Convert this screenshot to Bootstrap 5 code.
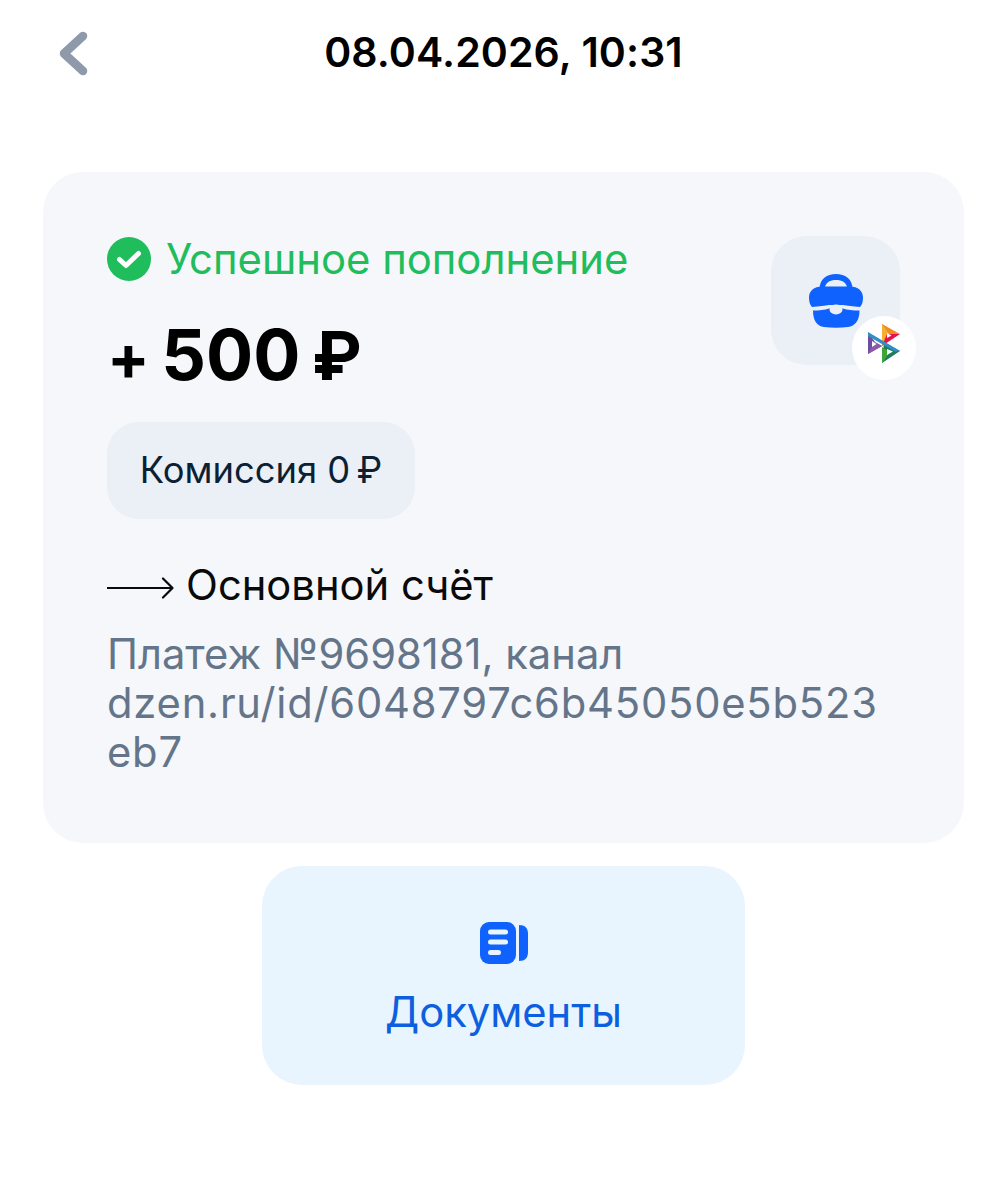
<!DOCTYPE html>
<html lang="ru">
<head>
<meta charset="utf-8">
<title>Операция</title>
<link href="https://cdn.jsdelivr.net/npm/bootstrap@5.3.0/dist/css/bootstrap.min.css" rel="stylesheet">
<style>
body { font-family: Inter, "Noto Sans", "Liberation Sans", sans-serif; background: #fff; color: #000; }
.scr { height: 1200px; padding: 0 43px; }
.topbar { height: 172px; padding-bottom: 68px; position: relative; }
.back-ic { position: absolute; left: 13px; top: 30px; width: 32px; height: 46px; }
.top-t { font-size: 41px; font-weight: 600; line-height: 105px; letter-spacing: .1px; }
.opcard { background: #f5f7fb; border-radius: 40px; height: 671px; padding: 64px; }
.stat { color: #1fbd5c; font-size: 41.800px; line-height: 46px; gap: 15px; }
.amt { font-size: 70px; font-weight: 700; line-height: 84px; margin-top: 31px; word-spacing: -5px; }
.amt-plus { font-size: 63px; line-height: 1; }
.amt-rub { font-size: 67px; line-height: 1; }
.fee { background: #ebeff6; color: #0b1f35; border-radius: 32px; height: 97px; width: 308px; font-size: 36.300px; margin-top: 25px; }
.dest { font-size: 41.700px; line-height: 46px; margin-top: 43px; gap: 12px; color: #0a0a0a; }
.dest svg { margin-top: 6px; }
.note { color: #64758a; font-size: 41.700px; line-height: 49px; margin-top: 22px; width: 775px; overflow-wrap: anywhere; }
.note-id { letter-spacing: .8px; }
.iconbox { background: #ebeff6; border-radius: 36px; width: 129px; height: 129px; position: absolute; right: 64px; top: 64px; }
.logo-b { background: #fff; border-radius: 50%; width: 64px; height: 64px; position: absolute; left: 81px; top: 80px; }
.docs { background: #e8f5fe; color: #0e5fe0; border-radius: 40px; width: 483px; height: 219px; margin: 23px auto 0; padding-top: 13px; font-size: 41.700px; gap: 16px; }
</style>
</head>
<body>
<div class="scr">
  <div class="topbar d-flex justify-content-center">
    <svg class="back-ic" viewBox="0 0 32 46" fill="none"><path d="M27 6 L8 23.500 L27 41" stroke="#8e9aaa" stroke-width="8.500" stroke-linecap="round" stroke-linejoin="round"/></svg>
    <div class="top-t">08.04.2026, 10:31</div>
  </div>
  <div class="opcard position-relative">
    <div class="stat d-flex align-items-center">
      <svg width="44" height="44" viewBox="0 0 44 44"><circle cx="22" cy="22" r="22" fill="#1fbd5c"/><path d="M12.500 22.500 L19 28.500 L31.500 16.500" fill="none" stroke="#fff" stroke-width="5" stroke-linecap="round" stroke-linejoin="round"/></svg>
      <span>Успешное пополнение</span>
    </div>
    <div class="amt"><span class="amt-plus">+</span> 500 <span class="amt-rub">₽</span></div>
    <div class="fee d-flex align-items-center justify-content-center">Комиссия 0&#8201;₽</div>
    <div class="dest d-flex align-items-center">
      <svg width="67" height="22" viewBox="0 0 67 22" fill="none"><path d="M0 11 H65 M56 1.500 L65.500 11 L56 20.500" stroke="#0a0a0a" stroke-width="2.200" stroke-linecap="round" stroke-linejoin="round"/></svg>
      <span>Основной счёт</span>
    </div>
    <div class="note">Платеж №9698181, канал <span class="note-id">dzen.ru/id/6048797c6b45050e5b523eb7</span></div>
    <div class="iconbox d-flex align-items-center justify-content-center">
      <svg width="66" height="64" viewBox="0 0 66 64">
        <path d="M16.500 20 C16.500 10 24 5 33 5 C42 5 49.500 10 49.500 20 Z" fill="#0f62fe"/>
        <path d="M22 18 C23 13.500 27 11 33 11 C39 11 43 13.500 44 18 Z" fill="#ebeff6"/>
        <path d="M19 17.500 H47 C55 17.500 60 22 60 28.500 C60 33 59 36 57 38 C50 37.500 44 36.500 40 36 H26 C22 36.500 16 37.500 9 38 C7 36 6 33 6 28.500 C6 22 11 17.500 19 17.500 Z" fill="#0f62fe"/>
        <path d="M10 41.500 C16 41.500 22 41 26 39.500 H40 C44 41 50 41.500 56.500 41.500 C56.500 52 52 57 45 58 C37 59 29 59 21 58 C14 57 10 52 10 41.500 Z" fill="#0f62fe"/>
        <ellipse cx="33" cy="40.500" rx="6.500" ry="5" fill="#ebeff6"/>
      </svg>
      <div class="logo-b d-flex align-items-center justify-content-center">
        <svg width="44" height="52" viewBox="0 0 44 52">
          <polygon points="20,2 38,12 20,12" fill="#f08a24"/>
          <polygon points="20,2 27,12 20,24" fill="#f4b02e"/>
          <polygon points="38,12 20,24 25,12" fill="#e3134d"/>
          <polygon points="25,11 25,16 29.500,13.500" fill="#fff"/>
          <polygon points="6,10 6,32 20,24 13,20" fill="#6c4d9f"/>
          <polygon points="6,32 20,24 14,21 9,26" fill="#8d58ad"/>
          <polygon points="10,19 10,25 14.500,22" fill="#fff"/>
          <polygon points="20,41 38,29 22,20" fill="#1d7d5a"/>
          <polygon points="20,41 20,25 28,30" fill="#41a535"/>
          <polygon points="25,27 25,33 31,29.500" fill="#fff"/>
          <polygon points="6,10 38,29 33,29.500 6,14" fill="#2f8fc6"/>
        </svg>
      </div>
    </div>
  </div>
  <div class="docs d-flex flex-column align-items-center justify-content-center">
    <svg width="50" height="44" viewBox="0 0 50 44">
      <rect x="1" y="1" width="36" height="42" rx="9" fill="#0f62fe"/>
      <rect x="9" y="8.500" width="20" height="5" rx="2.500" fill="#e8f5fe"/>
      <rect x="9" y="18.500" width="20" height="5" rx="2.500" fill="#e8f5fe"/>
      <rect x="9" y="29" width="13" height="5" rx="2.500" fill="#e8f5fe"/>
      <path d="M40 4 C46 4 49 7 49 13 V31 C49 37 46 40 40 40 Z" fill="#0f62fe"/>
    </svg>
    <span>Документы</span>
  </div>
</div>
</body>
</html>
